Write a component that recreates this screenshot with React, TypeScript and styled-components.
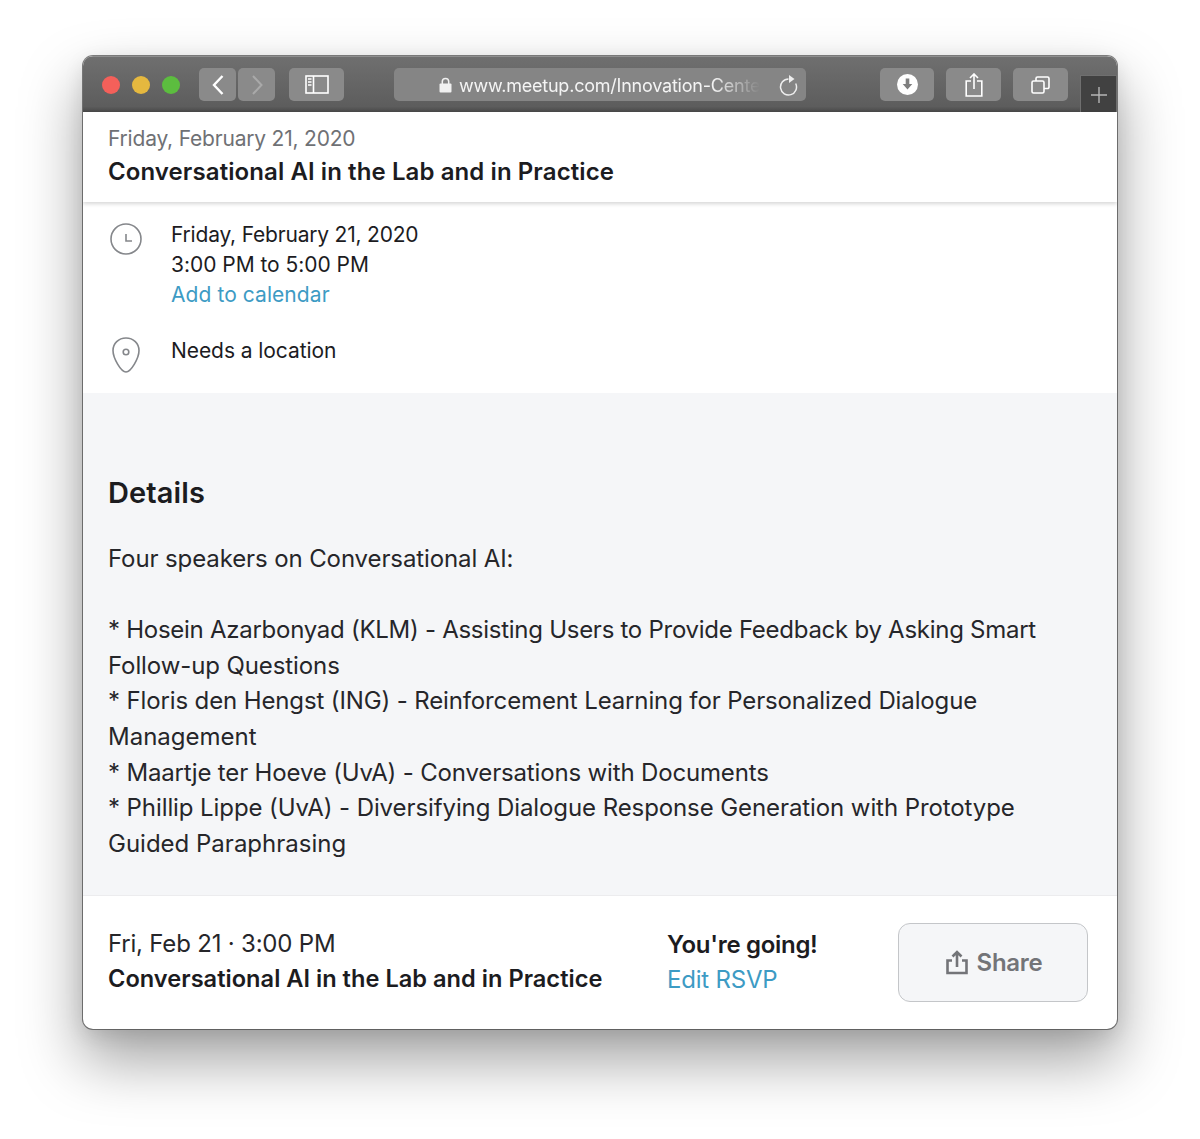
import React from "react";
import styled, { createGlobalStyle } from "styled-components";

const Global = createGlobalStyle`
  html, body { margin: 0; padding: 0; background: #fff; }
  body { font-family: Inter, "Liberation Sans", sans-serif; width: 1200px; height: 1139px; overflow: hidden; }
`;
const Page = styled.div`
  height: 1139px;
  padding: 56px 83px 0;
  box-sizing: border-box;
`;
const Window = styled.div`
  height: 973px;
  border-radius: 10px;
  overflow: hidden;
  background: #fff;
  display: flex;
  flex-direction: column;
  box-shadow: 0 0 0 1px rgba(60,60,60,.65), 0 30px 60px 2px rgba(0,0,0,.36), 0 6px 20px rgba(0,0,0,.1);
`;
const TitleBar = styled.div`
  height: 56px;
  flex: none;
  box-sizing: border-box;
  display: flex;
  align-items: flex-start;
  padding: 11px 0 0 19px;
  background: linear-gradient(#6f6f6f, #5d5d5d 90%, #484848);
  border-top: 1px solid #8f8f8f;
`;
const Lights = styled.div`
  display: flex;
  gap: 12px;
  margin: 8px 19px 0 0;
`;
const Light = styled.span<{ $c: string }>`
  width: 18px;
  height: 18px;
  border-radius: 50%;
  background: ${(p) => p.$c};
`;
const ToolBtn = styled.div<{ $w: number; $ml?: number }>`
  width: ${(p) => p.$w}px;
  height: 33px;
  margin-left: ${(p) => p.$ml ?? 0}px;
  flex: none;
  border-radius: 5px;
  background: #8a8a8a;
  display: flex;
  align-items: center;
  justify-content: center;
`;
const UrlBar = styled.div`
  width: 412px;
  height: 33px;
  margin-left: 50px;
  flex: none;
  border-radius: 5px;
  background: #858585;
  box-sizing: border-box;
  padding-left: 45px;
  display: flex;
  align-items: center;
`;
const UrlText = styled.span`
  font-family: Inter, sans-serif;
  font-size: 18px;
  letter-spacing: -0.22px;
  color: #f4f4f4;
  margin: 2px 0 0 7px;
  white-space: nowrap;
  -webkit-mask-image: linear-gradient(90deg, #000 84%, transparent 100%);
  mask-image: linear-gradient(90deg, #000 84%, transparent 100%);
`;
const Reload = styled.div`
  margin-left: auto;
  margin-right: 7px;
  display: flex;
`;
const PlusTab = styled.div`
  width: 37px;
  height: 38px;
  margin: 7px 0 0 12px;
  flex: none;
  box-sizing: border-box;
  background: #414141;
  border: 1px solid #6f6f6f;
  border-bottom: none;
  display: flex;
  align-items: center;
  justify-content: center;
`;
const Header = styled.header`
  height: 90px;
  flex: none;
  box-sizing: border-box;
  padding: 12px 25px 0;
  background: #fff;
  box-shadow: 0 2px 4px rgba(0,0,0,.16);
  position: relative;
`;
const HeaderDate = styled.div`
  font-size: 21px;
  line-height: 30px;
  letter-spacing: -0.2px;
  color: #6f7175;
`;
const HeaderTitle = styled.h1`
  margin: 1px 0 0;
  font-size: 24px;
  line-height: 33px;
  font-weight: 600;
  color: #1c1c1f;
  letter-spacing: 0.09px;
`;
const Info = styled.section`
  height: 191px;
  flex: none;
  box-sizing: border-box;
  padding: 18px 25px 0 26px;
`;
const InfoRow = styled.div<{ $mb?: number }>`
  display: flex;
  gap: 28px;
  margin-bottom: ${(p) => p.$mb ?? 0}px;
`;
const IconCell = styled.div<{ $top: number }>`
  width: 34px;
  flex: none;
  padding-top: ${(p) => p.$top}px;
  display: flex;
  justify-content: center;
`;
const InfoLine = styled.div<{ $ls: number; $link?: boolean }>`
  font-size: 21px;
  line-height: 30px;
  letter-spacing: ${(p) => p.$ls}px;
  color: ${(p) => (p.$link ? "#3d9bc4" : "#1c1c1f")};
`;
const Details = styled.section`
  flex: 1;
  background: #f5f6f8;
  box-sizing: border-box;
  padding: 80px 25px 0;
  border-bottom: 1px solid #ececee;
`;
const DetailsTitle = styled.h2`
  margin: 0 0 28px;
  font-size: 29px;
  line-height: 40px;
  font-weight: 600;
  letter-spacing: 0.1px;
  color: #1c1c1f;
`;
const Para = styled.div`
  margin-bottom: 35.6px;
`;
const Line = styled.div<{ $ls?: number }>`
  font-size: 24px;
  line-height: 35.6px;
  color: #26262a;
  white-space: nowrap;
  letter-spacing: ${(p) => p.$ls ?? 0}px;
`;
const Footer = styled.footer`
  height: 133px;
  flex: none;
  box-sizing: border-box;
  padding: 30px 29px 0 25px;
  display: flex;
`;
const FooterLeft = styled.div`
  width: 559px;
  flex: none;
`;
const FooterDate = styled.div`
  font-size: 24px;
  line-height: 36px;
  letter-spacing: -0.2px;
  color: #26262a;
`;
const FooterTitle = styled.div`
  margin-top: -1px;
  font-size: 23.6px;
  line-height: 36px;
  font-weight: 600;
  letter-spacing: 0.02px;
  color: #1c1c1f;
`;
const Rsvp = styled.div`
  width: 230px;
  flex: none;
`;
const Going = styled.div`
  margin-top: 1px;
  font-size: 24px;
  line-height: 36px;
  font-weight: 600;
  letter-spacing: -0.3px;
  color: #1c1c1f;
`;
const EditLink = styled.a`
  display: block;
  font-size: 24px;
  line-height: 34px;
  letter-spacing: -0.2px;
  color: #3d9bc4;
`;
const ShareBtn = styled.button`
  width: 191px;
  height: 79px;
  margin: -3px 0 0 1px;
  box-sizing: border-box;
  border: 1.5px solid #c4c6c9;
  border-radius: 12px;
  background: #f5f6f8;
  color: #737478;
  font: 600 24px Inter, sans-serif;
  letter-spacing: -0.3px;
  padding: 0 0 0 2px;
  display: flex;
  align-items: center;
  justify-content: center;
  gap: 9px;
`;

const ic = { fill: "none", stroke: "#fff", strokeWidth: 1.6 };

const lines: [string, number][] = [
  ["* Hosein Azarbonyad (KLM) - Assisting Users to Provide Feedback by Asking Smart", -0.27],
  ["Follow-up Questions", -0.1],
  ["* Floris den Hengst (ING) - Reinforcement Learning for Personalized Dialogue", -0.13],
  ["Management", 0],
  ["* Maartje ter Hoeve (UvA) - Conversations with Documents", -0.16],
  ["* Phillip Lippe (UvA) - Diversifying Dialogue Response Generation with Prototype", -0.09],
  ["Guided Paraphrasing", 0],
];

export default function App() {
  return (
    <Page>
      <Global />
      <Window>
        <TitleBar>
          <Lights>
            <Light $c="#f4605a" />
            <Light $c="#e5b83f" />
            <Light $c="#5cbd3f" />
          </Lights>
          <ToolBtn $w={37}>
            <svg width="14" height="22" viewBox="0 0 14 22" {...ic} strokeWidth={2.4}><path d="M11.500 2 3 11l8.500 9" /></svg>
          </ToolBtn>
          <ToolBtn $w={37} $ml={2}>
            <svg width="14" height="22" viewBox="0 0 14 22" fill="none" stroke="#a9a9a9" strokeWidth={2}><path d="M3 2l8.500 9L3 20" /></svg>
          </ToolBtn>
          <ToolBtn $w={55} $ml={14}>
            <svg width="24" height="19" viewBox="0 0 24 19" {...ic}><rect x="1" y="1" width="22" height="17" /><path d="M8.500 1v17M3 4h3.500M3 7h3.500M3 10h3.500" /></svg>
          </ToolBtn>
          <UrlBar>
            <svg width="13" height="16" viewBox="0 0 13 16"><path d="M3.300 7V4.600a3.200 3.200 0 0 1 6.400 0V7" fill="none" stroke="#f0f0f0" strokeWidth="1.5" /><rect x="0.500" y="6.500" width="12" height="9" rx="1" fill="#f0f0f0" /></svg>
            <UrlText>www.meetup.com/Innovation-Cente</UrlText>
            <Reload>
              <svg width="20" height="22" viewBox="0 0 20 22" fill="none" stroke="#eee" strokeWidth="1.5"><path d="M9.500 5a8 8 0 1 0 7.200 4.500" /><path d="M10 1l5.500 4L10 9z" fill="#eee" stroke="none" /></svg>
            </Reload>
          </UrlBar>
          <ToolBtn $w={54} $ml={74}>
            <svg width="21" height="21" viewBox="0 0 21 21"><circle cx="10.500" cy="10.500" r="10.500" fill="#fff" /><path d="M8.700 4.500h3.600v5.500h3l-4.800 5.500-4.800-5.500h3z" fill="#7f7f7f" /></svg>
          </ToolBtn>
          <ToolBtn $w={55} $ml={12}>
            <svg width="18" height="24" viewBox="0 0 18 24" {...ic}><path d="M6 8H1.200v15h15.600V8H12M9 16V1.500M5 5l4-4 4 4" /></svg>
          </ToolBtn>
          <ToolBtn $w={55} $ml={12}>
            <svg width="19" height="18" viewBox="0 0 19 18" {...ic}><rect x="1" y="5" width="12" height="12" rx="1.500" /><path d="M5 5V2.500A1.500 1.500 0 0 1 6.500 1H16.500A1.500 1.500 0 0 1 18 2.500V11a1.500 1.500 0 0 1-1.500 1.500H13" /></svg>
          </ToolBtn>
          <PlusTab>
            <svg width="16" height="16" viewBox="0 0 16 16" stroke="#b5b5b5" strokeWidth="1.4"><path d="M8 0v16M0 8h16" /></svg>
          </PlusTab>
        </TitleBar>
        <Header>
          <HeaderDate>Friday, February 21, 2020</HeaderDate>
          <HeaderTitle>Conversational AI in the Lab and in Practice</HeaderTitle>
        </Header>
        <Info>
          <InfoRow $mb={26}>
            <IconCell $top={3}>
              <svg width="32" height="32" viewBox="0 0 32 32" fill="none" stroke="#85878b" strokeWidth="1.6"><circle cx="16" cy="16" r="15" /><path d="M16 11v7h6" /></svg>
            </IconCell>
            <div>
              <InfoLine $ls={-0.2}>Friday, February 21, 2020</InfoLine>
              <InfoLine $ls={-0.03}>3:00 PM to 5:00 PM</InfoLine>
              <InfoLine $ls={0.07} $link>Add to calendar</InfoLine>
            </div>
          </InfoRow>
          <InfoRow>
            <IconCell $top={1}>
              <svg width="28" height="36" viewBox="0 0 28 36" fill="none" stroke="#85878b" strokeWidth="1.6"><path d="M14 1C6.500 1 1 6.500 1 13.500 1 21 9 35 14 35s13-14 13-21.500C27 6.500 21.500 1 14 1z" /><circle cx="14" cy="15" r="2.800" /></svg>
            </IconCell>
            <InfoLine $ls={-0.07}>Needs a location</InfoLine>
          </InfoRow>
        </Info>
        <Details>
          <DetailsTitle>Details</DetailsTitle>
          <Para>
            <Line $ls={-0.11}>Four speakers on Conversational AI:</Line>
          </Para>
          {lines.map(([text, ls]) => (
            <Line key={text} $ls={ls}>{text}</Line>
          ))}
        </Details>
        <Footer>
          <FooterLeft>
            <FooterDate>Fri, Feb 21 · 3:00 PM</FooterDate>
            <FooterTitle>Conversational AI in the Lab and in Practice</FooterTitle>
          </FooterLeft>
          <Rsvp>
            <Going>You're going!</Going>
            <EditLink>Edit RSVP</EditLink>
          </Rsvp>
          <ShareBtn>
            <svg width="22" height="25" viewBox="0 0 22 25" fill="none" stroke="#737478" strokeWidth="2.600"><path d="M6 10.500H1.500v12.500h19V10.500H16M11 17V2M6.500 6.500 11 2l4.500 4.500" /></svg>
            Share
          </ShareBtn>
        </Footer>
      </Window>
    </Page>
  );
}
